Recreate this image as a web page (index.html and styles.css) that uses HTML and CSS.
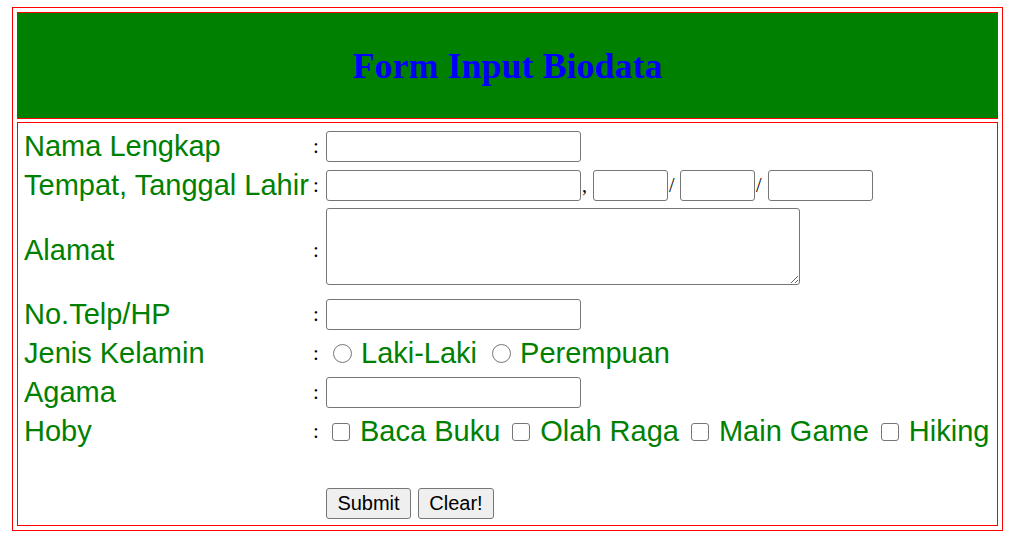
FILE: index.html
```html
<!DOCTYPE html>
<html lang="id">
<head>
<meta charset="utf-8">
<title>Form Input Biodata</title>
<link rel="stylesheet" href="styles.css">
</head>
<body>
<div class="frame">
  <div class="head"><h2 class="title">Form Input Biodata</h2></div>
  <div class="body">
    <form class="form">
      <div class="row">
        <span class="label">Nama Lengkap</span><span class="colon">:</span>
        <div class="field"><input class="text w-main" type="text"></div>
      </div>
      <div class="row">
        <span class="label">Tempat, Tanggal Lahir</span><span class="colon">:</span>
        <div class="field base">
          <input class="text w-main" type="text"><span class="sep">,</span><input class="text w-day" type="text"><span class="sep">/</span><input class="text w-day" type="text"><span class="sep sep-wide">/</span><input class="text w-year" type="text">
        </div>
      </div>
      <div class="row tall">
        <span class="label">Alamat</span><span class="colon">:</span>
        <div class="field top"><textarea class="area"></textarea></div>
      </div>
      <div class="row">
        <span class="label">No.Telp/HP</span><span class="colon">:</span>
        <div class="field"><input class="text w-main" type="text"></div>
      </div>
      <div class="row">
        <span class="label">Jenis Kelamin</span><span class="colon">:</span>
        <div class="field">
          <input class="radio first" type="radio" name="jk"><span class="opt">Laki-Laki</span>
          <input class="radio" type="radio" name="jk"><span class="opt">Perempuan</span>
        </div>
      </div>
      <div class="row">
        <span class="label">Agama</span><span class="colon">:</span>
        <div class="field"><input class="text w-main" type="text"></div>
      </div>
      <div class="row">
        <span class="label">Hoby</span><span class="colon">:</span>
        <div class="field">
          <input class="check first" type="checkbox"><span class="opt">Baca Buku</span>
          <input class="check" type="checkbox"><span class="opt">Olah Raga</span>
          <input class="check" type="checkbox"><span class="opt">Main Game</span>
          <input class="check" type="checkbox"><span class="opt">Hiking</span>
        </div>
      </div>
      <div class="row blank"></div>
      <div class="row">
        <span class="label"></span><span class="colon"></span>
        <div class="field">
          <button class="btn btn-submit" type="submit">Submit</button><button class="btn btn-clear" type="reset">Clear!</button>
        </div>
      </div>
    </form>
  </div>
</div>
</body>
</html>
```
FILE: styles.css
```css
body {
  margin: 7px 0 0 12px;
  background: #ffffff;
}

.frame {
  width: 991px;
  box-sizing: border-box;
  border: 1px solid #ff0000;
  padding: 4px;
  display: flex;
  flex-direction: column;
  gap: 3px;
}

.head {
  height: 107px;
  box-sizing: border-box;
  border: 1px solid #ff0000;
  background: #008000;
  display: flex;
  align-items: center;
  justify-content: center;
  padding-top: 1px;
}

.title {
  margin: 0;
  font: bold 36px/40px "Liberation Serif", "Times New Roman", serif;
  color: #0000ff;
}

.body {
  height: 404px;
  box-sizing: border-box;
  border: 1px solid #ff0000;
  padding: 4px 0 0 6px;
}

.form {
  margin: 0;
}

.row {
  display: flex;
  align-items: center;
  height: 39px;
}

.row.tall {
  height: 90px;
}

.row.blank {
  height: 33px;
}

.label {
  width: 289px;
  flex: none;
  font: 29px "Liberation Sans", Arial, sans-serif;
  color: #008000;
  white-space: nowrap;
}

.colon {
  width: 13px;
  flex: none;
  font: 21px "Liberation Serif", "Times New Roman", serif;
  color: #000000;
}

.field {
  display: flex;
  align-items: center;
}

.field.base {
  align-items: baseline;
}

.field.top {
  align-self: flex-start;
  padding-top: 3px;
}

.text {
  box-sizing: border-box;
  height: 31px;
  margin: 0;
  padding: 1px 3px;
  border: 1px solid #767676;
  border-radius: 3px;
  background: #ffffff;
  font: 20px "Liberation Sans", Arial, sans-serif;
}

.w-main { width: 255px; }
.w-day { width: 75px; }
.w-year { width: 105px; }

.sep {
  width: 12px;
  font: 20px "Liberation Serif", "Times New Roman", serif;
  color: #000000;
  padding-left: 1px;
  box-sizing: border-box;
}

.sep-wide {
  width: 13px;
}

.area {
  box-sizing: border-box;
  width: 474px;
  height: 77px;
  margin: 0;
  border: 1px solid #767676;
  border-radius: 3px;
  background: #ffffff;
  font: 20px "Liberation Mono", monospace;
}

.radio,
.check {
  appearance: none;
  -webkit-appearance: none;
  box-sizing: border-box;
  margin: 0;
  border: 1px solid #767676;
  background: #ffffff;
  flex: none;
}

.radio {
  width: 19px;
  height: 19px;
  border-radius: 50%;
  margin-left: 15px;
}

.check {
  width: 18px;
  height: 18px;
  border-radius: 3px;
  margin-left: 12px;
}

.radio.first {
  margin-left: 7px;
}

.check.first {
  margin-left: 6px;
}

.opt {
  margin-left: 9px;
  font: 29px "Liberation Sans", Arial, sans-serif;
  color: #008000;
  white-space: nowrap;
}

.check + .opt {
  margin-left: 10px;
}

.btn {
  box-sizing: border-box;
  height: 31px;
  margin: 0 7px 0 0;
  border: 1px solid #767676;
  border-radius: 3px;
  background: #efefef;
  color: #000000;
  font: 20px "Liberation Sans", Arial, sans-serif;
}

.btn-submit {
  width: 85px;
  padding: 0;
}

.btn-clear {
  width: 76px;
  padding: 0;
}
```
